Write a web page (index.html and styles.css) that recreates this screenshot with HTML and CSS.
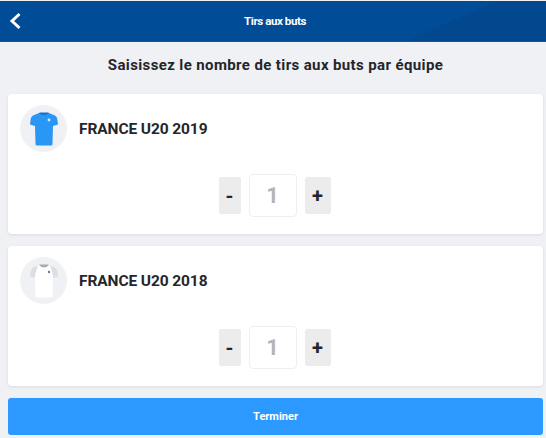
FILE: index.html
```html
<!DOCTYPE html>
<html lang="fr">
<head>
  <meta charset="UTF-8" />
  <meta name="viewport" content="width=device-width, initial-scale=1.0" />
  <title>Tirs aux buts</title>
  <link rel="stylesheet" href="styles.css">
</head>
<body>
  <header class="topbar">
    <a class="back" href="#" aria-label="Retour">
      <svg width="13" height="18" viewBox="0 0 13 18"><path d="M10.5 2 L3 9 L10.5 16" fill="none" stroke="#fff" stroke-width="3"/></svg>
    </a>
    <h1>Tirs aux buts</h1>
  </header>

  <main class="content">
    <h2 class="intro">Saisissez le nombre de tirs aux buts par équipe</h2>

    <!-- Team 1 -->
    <section class="card">
      <div class="team">
        <div class="jersey">
          <svg width="28" height="34" viewBox="0 0 28 34">
            <path d="M9 1 L19 1 L25 3.5 Q27 4.5 27.3 7 L28 12.5 L23 14 L22.5 32 Q22.5 33.5 21 33.5 L7 33.5 Q5.5 33.5 5.5 32 L5 14 L0 12.5 L0.7 7 Q1 4.5 3 3.5 Z" fill="#2a96f5"/>
            <path d="M9 1 Q14 5 19 1 L18 0.5 L10 0.5 Z" fill="#1670c4"/>
            <circle cx="19" cy="8" r="1.4" fill="#d8ecff"/>
          </svg>
        </div>
        <span class="team-name">FRANCE U20 2019</span>
      </div>
      <div class="stepper">
        <button type="button" class="step minus">-</button>
        <div class="count">1</div>
        <button type="button" class="step plus">+</button>
      </div>
    </section>

    <!-- Team 2 -->
    <section class="card">
      <div class="team">
        <div class="jersey">
          <svg width="28" height="34" viewBox="0 0 28 34">
            <path d="M9 1 L19 1 L25 3.5 Q27 4.5 27.3 7 L28 12.5 L23 14 L22.5 32 Q22.5 33.5 21 33.5 L7 33.5 Q5.5 33.5 5.5 32 L5 14 L0 12.5 L0.7 7 Q1 4.5 3 3.5 Z" fill="#fff"/>
            <path d="M8 1.4 L3 3.5 Q1 4.5 0.7 7 L0 12.5 L5 14 L5.5 9 Z M20 1.4 L25 3.5 Q27 4.5 27.3 7 L28 12.5 L23 14 L22.5 9 Z" fill="#dcdee1"/>
            <path d="M9 1 Q14 6 19 1 L18 0.5 L10 0.5 Z" fill="#a9abae"/>
            <circle cx="19" cy="8" r="1.2" fill="#5f7fa8"/>
          </svg>
        </div>
        <span class="team-name">FRANCE U20 2018</span>
      </div>
      <div class="stepper">
        <button type="button" class="step minus">-</button>
        <div class="count">1</div>
        <button type="button" class="step plus">+</button>
      </div>
    </section>

    <button type="button" class="finish">Terminer</button>
  </main>
</body>
</html>
```

FILE: styles.css
```css
:root {
  --blue-dark: #014c97;
  --blue-accent: #2b99ff;
  --page-bg: #f0f1f5;
  --text-color: #24262b;
}

* {
  box-sizing: border-box;
  margin: 0;
  padding: 0;
}

body {
  background-color: var(--page-bg);
  color: var(--text-color);
  font-family: Roboto, "Liberation Sans", sans-serif;
  padding-top: 1px;
}

.topbar {
  height: 41px;
  display: flex;
  align-items: center;
  justify-content: center;
  padding-left: 4px;
  background: linear-gradient(156deg, var(--blue-dark) 78%, #01488f 78%);
  border-bottom: 1px solid #0a5aa8;
  position: relative;
}

.topbar h1 {
  color: #fff;
  font-size: 11.5px;
  font-weight: 700;
  letter-spacing: -0.4px;
}

.back {
  position: absolute;
  left: 9px;
  top: 11px;
  line-height: 0;
}

.content {
  padding: 0 3px 0 8px;
}

.intro {
  font-size: 15px;
  font-weight: 700;
  letter-spacing: 0.38px;
  text-align: center;
  line-height: 18px;
  padding: 14px 0 20px;
}

.card {
  height: 140px;
  margin-bottom: 12px;
  padding: 11px 12px;
  background-color: #fff;
  border-radius: 4px;
  box-shadow: 0 1px 3px rgba(40, 50, 90, 0.1);
}

.team {
  display: flex;
  align-items: center;
  gap: 12px;
}

.jersey {
  width: 47px;
  height: 47px;
  border-radius: 50%;
  background-color: var(--page-bg);
  display: flex;
  align-items: center;
  justify-content: center;
}

.team-name {
  font-size: 15.5px;
  font-weight: 700;
  letter-spacing: -0.1px;
}

.stepper {
  display: flex;
  align-items: center;
  justify-content: center;
  gap: 8px;
  margin-top: 22px;
  padding-right: 2px;
}

.step {
  height: 37px;
  border: none;
  border-radius: 2px;
  background-color: #ececec;
  color: var(--text-color);
  font-family: inherit;
  font-size: 20px;
  font-weight: 700;
}

.minus {
  width: 22px;
}

.plus {
  width: 26px;
}

.count {
  width: 48px;
  height: 43px;
  display: flex;
  align-items: center;
  justify-content: center;
  border: 1px solid #efefef;
  border-radius: 4px;
  color: #b5b5b5;
  font-size: 22px;
  font-weight: 700;
}

.finish {
  display: block;
  width: 100%;
  height: 37px;
  border: none;
  border-radius: 3px;
  background-color: var(--blue-accent);
  color: #fff;
  font-family: inherit;
  font-size: 11px;
  font-weight: 700;
}
```
